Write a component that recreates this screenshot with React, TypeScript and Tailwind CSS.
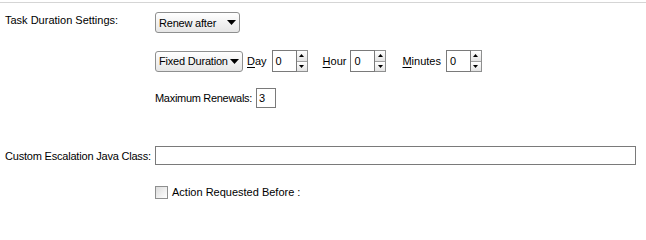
import React from "react"

function Dropdown({ label, width }: { label: string; width: string }) {
  return (
    <div
      className={`${width} shrink-0 h-[21px] flex items-center justify-between pl-[3px] pr-[3px] rounded-[3px] border border-[#8e8f8f] bg-gradient-to-b from-white to-[#e6e6e6] text-black`}
    >
      <span className="tracking-[-0.2px]">{label}</span>
      <svg width="9" height="5" viewBox="0 0 9 5" className="shrink-0">
        <path d="M0 0h9L4.5 5z" fill="#000" />
      </svg>
    </div>
  )
}

function Spinner({ value }: { value: string }) {
  return (
    <div className="flex h-[22px] shrink-0">
      <div className="w-[25px] h-full border border-[#7a7a7a] bg-white pl-[3px] flex items-center">{value}</div>
      <div className="w-[11px] h-full flex flex-col border border-l-0 border-[#8e8f8f]">
        <div className="flex-1 flex items-center justify-center bg-gradient-to-b from-white to-[#e3e3e3] border-b border-[#a0a0a0]">
          <svg width="5" height="3" viewBox="0 0 5 3">
            <path d="M0 3h5L2.5 0z" fill="#000" />
          </svg>
        </div>
        <div className="flex-1 flex items-center justify-center bg-gradient-to-b from-white to-[#e3e3e3]">
          <svg width="5" height="3" viewBox="0 0 5 3">
            <path d="M0 0h5L2.5 3z" fill="#000" />
          </svg>
        </div>
      </div>
    </div>
  )
}

function Mnemonic({ first, rest }: { first: string; rest: string }) {
  return (
    <span>
      <span className="underline underline-offset-2">{first}</span>
      {rest}
    </span>
  )
}

export default function App() {
  return (
    <div className="w-[646px] h-[212px] bg-white overflow-hidden whitespace-nowrap text-[11px] leading-[14px] text-black font-['Liberation_Sans',Arial,sans-serif]">
      <div className="mt-[2px] border-t border-[#d5d5d5]" />

      <div className="pl-[5px]">
        {/* Task duration */}
        <div className="flex items-start mt-[9px]">
          <div className="w-[150px] shrink-0 pt-[1px]">Task Duration Settings:</div>
          <Dropdown label="Renew after" width="w-[85px]" />
        </div>

        <div className="flex items-center mt-[17px] ml-[150px]">
          <Dropdown label="Fixed Duration" width="w-[88px]" />
          <span className="ml-[4px]">
            <Mnemonic first="D" rest="ay" />
          </span>
          <div className="ml-[5px]">
            <Spinner value="0" />
          </div>
          <span className="ml-[15px]">
            <Mnemonic first="H" rest="our" />
          </span>
          <div className="ml-[4px]">
            <Spinner value="0" />
          </div>
          <span className="ml-[16px]">
            <Mnemonic first="M" rest="inutes" />
          </span>
          <div className="ml-[5px]">
            <Spinner value="0" />
          </div>
        </div>

        <div className="flex items-center mt-[16px] ml-[150px]">
          <span className="tracking-[-0.3px]">Maximum Renewals:</span>
          <div className="ml-[4px] w-[20px] h-[20px] border border-[#7a7a7a] pl-[2px] flex items-center">3</div>
        </div>

        {/* Custom escalation */}
        <div className="flex items-center mt-[38px]">
          <div className="w-[150px] shrink-0 tracking-[-0.2px]">Custom Escalation Java Class:</div>
          <div className="w-[481px] h-[19px] border border-[#7a7a7a] bg-white" />
        </div>

        <div className="flex items-center mt-[20px] ml-[150px]">
          <div className="w-[13px] h-[13px] border border-[#8e8f8f] bg-gradient-to-br from-[#dcdcdc] to-white" />
          <span className="ml-[4px]">Action Requested Before :</span>
        </div>
      </div>
    </div>
  )
}
